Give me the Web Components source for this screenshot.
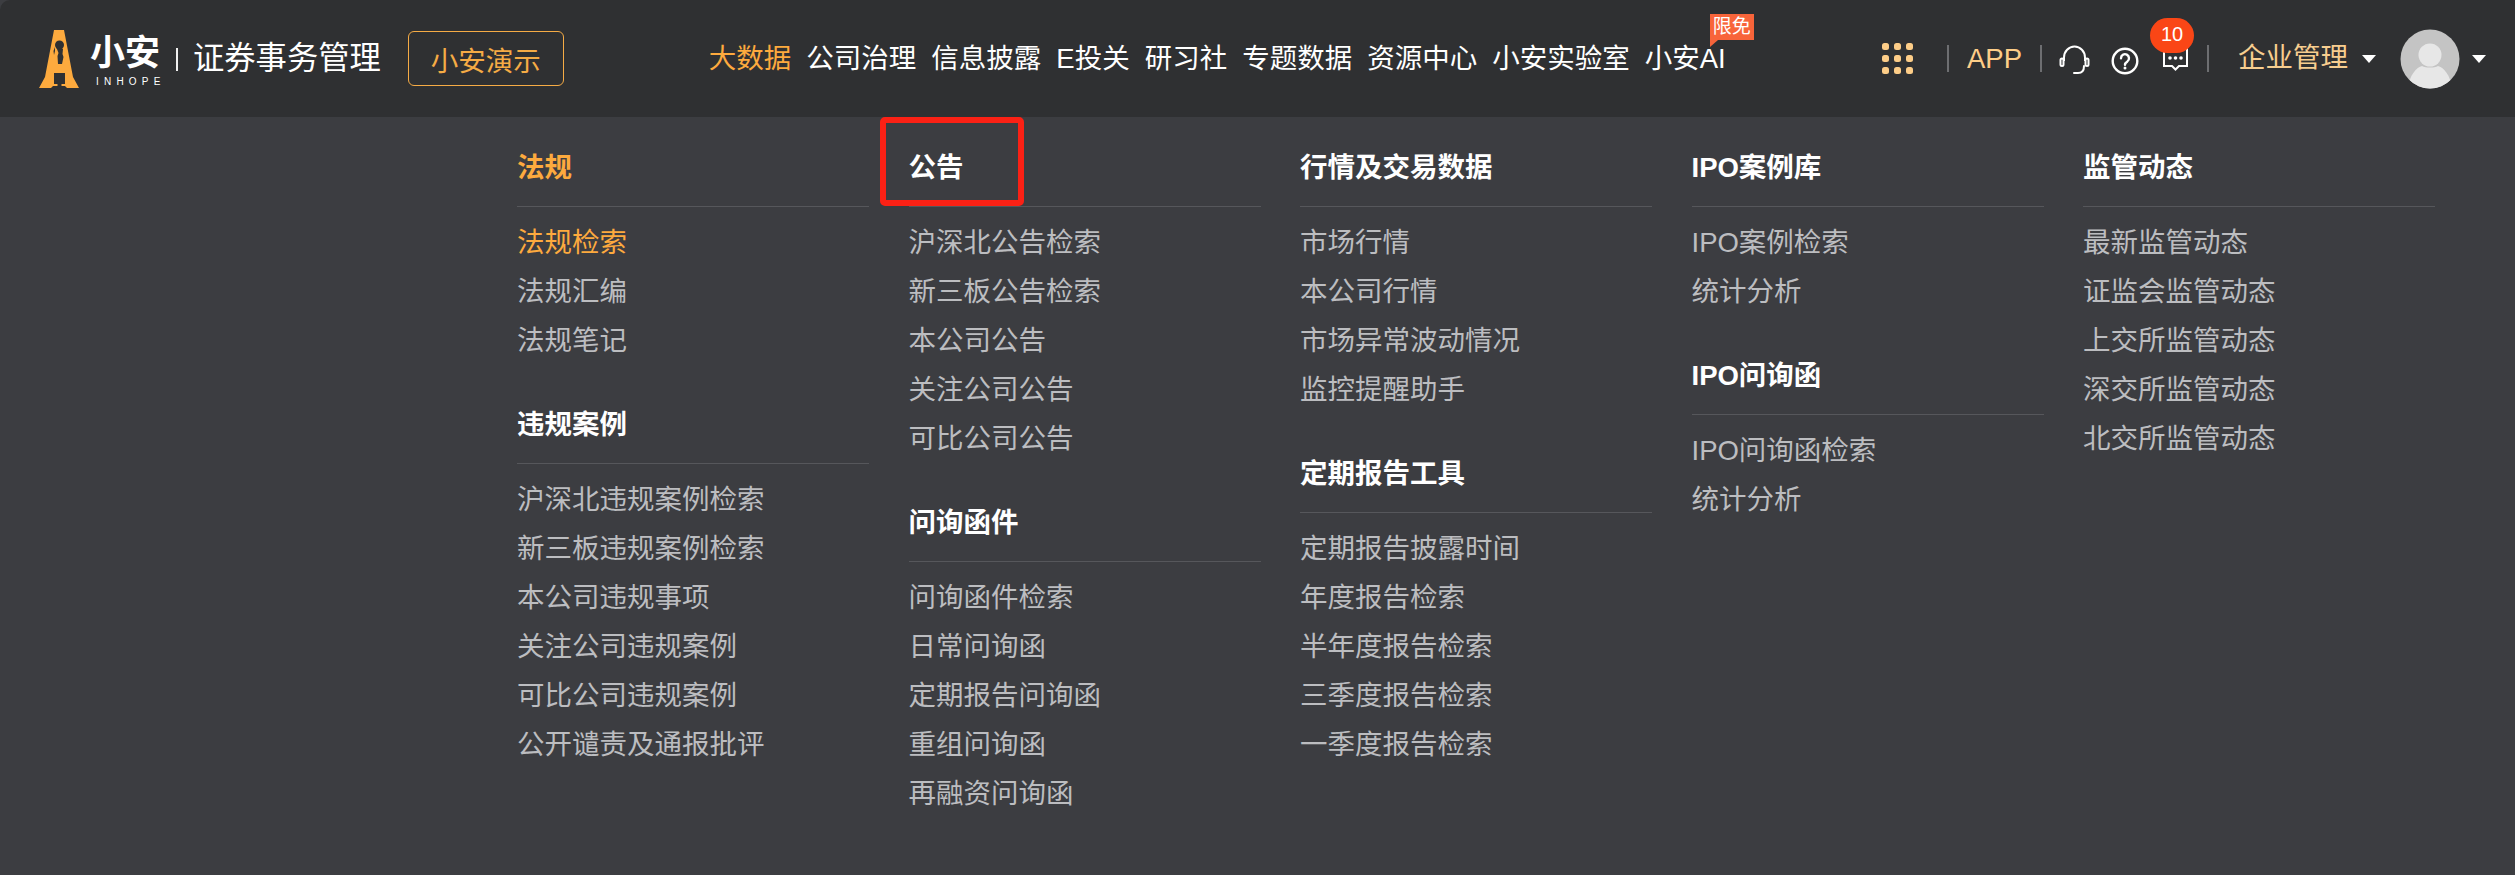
<!DOCTYPE html>
<html lang="zh-CN">
<head>
<meta charset="utf-8">
<title>小安 证券事务管理</title>
<style>
  html, body { margin: 0; height: 100%; background: #3c3d41; }
  body { font-family: "Liberation Sans", "Noto Sans CJK SC", sans-serif; overflow: hidden; }
</style>
</head>
<body>
<app-shell>
  <app-header slot="header">
    <nav-link slot="nav" active>大数据</nav-link>
    <nav-link slot="nav">公司治理</nav-link>
    <nav-link slot="nav">信息披露</nav-link>
    <nav-link slot="nav">E投关</nav-link>
    <nav-link slot="nav">研习社</nav-link>
    <nav-link slot="nav">专题数据</nav-link>
    <nav-link slot="nav">资源中心</nav-link>
    <nav-link slot="nav">小安实验室</nav-link>
    <nav-link slot="nav" tag="限免">小安AI</nav-link>
  </app-header>
  <mega-menu>
    <menu-column>
      <menu-group heading="法规" active>
        <menu-link active>法规检索</menu-link>
        <menu-link>法规汇编</menu-link>
        <menu-link>法规笔记</menu-link>
      </menu-group>
      <menu-group heading="违规案例">
        <menu-link>沪深北违规案例检索</menu-link>
        <menu-link>新三板违规案例检索</menu-link>
        <menu-link>本公司违规事项</menu-link>
        <menu-link>关注公司违规案例</menu-link>
        <menu-link>可比公司违规案例</menu-link>
        <menu-link>公开谴责及通报批评</menu-link>
      </menu-group>
    </menu-column>
    <menu-column>
      <menu-group heading="公告" marked>
        <menu-link>沪深北公告检索</menu-link>
        <menu-link>新三板公告检索</menu-link>
        <menu-link>本公司公告</menu-link>
        <menu-link>关注公司公告</menu-link>
        <menu-link>可比公司公告</menu-link>
      </menu-group>
      <menu-group heading="问询函件">
        <menu-link>问询函件检索</menu-link>
        <menu-link>日常问询函</menu-link>
        <menu-link>定期报告问询函</menu-link>
        <menu-link>重组问询函</menu-link>
        <menu-link>再融资问询函</menu-link>
      </menu-group>
    </menu-column>
    <menu-column>
      <menu-group heading="行情及交易数据">
        <menu-link>市场行情</menu-link>
        <menu-link>本公司行情</menu-link>
        <menu-link>市场异常波动情况</menu-link>
        <menu-link>监控提醒助手</menu-link>
      </menu-group>
      <menu-group heading="定期报告工具">
        <menu-link>定期报告披露时间</menu-link>
        <menu-link>年度报告检索</menu-link>
        <menu-link>半年度报告检索</menu-link>
        <menu-link>三季度报告检索</menu-link>
        <menu-link>一季度报告检索</menu-link>
      </menu-group>
    </menu-column>
    <menu-column>
      <menu-group heading="IPO案例库">
        <menu-link>IPO案例检索</menu-link>
        <menu-link>统计分析</menu-link>
      </menu-group>
      <menu-group heading="IPO问询函">
        <menu-link>IPO问询函检索</menu-link>
        <menu-link>统计分析</menu-link>
      </menu-group>
    </menu-column>
    <menu-column>
      <menu-group heading="监管动态">
        <menu-link>最新监管动态</menu-link>
        <menu-link>证监会监管动态</menu-link>
        <menu-link>上交所监管动态</menu-link>
        <menu-link>深交所监管动态</menu-link>
        <menu-link>北交所监管动态</menu-link>
      </menu-group>
    </menu-column>
  </mega-menu>
</app-shell>

<script>
// small helper, every element below has the same shadow setup
function shadow(el, html) {
  el.attachShadow({ mode: 'open' });
  el.shadowRoot.innerHTML = html;
}

class AppShell extends HTMLElement {
  constructor() {
    super();
    shadow(this, `
      <style>
        :host { display: flex; flex-direction: column; height: 875px; background: #3c3d41; }
      </style>
      <slot name="header"></slot>
      <slot></slot>
    `);
  }
}

class AppHeader extends HTMLElement {
  constructor() {
    super();
    shadow(this, `
      <style>
        :host {
          display: flex; align-items: center; height: 117px; padding: 0 29px 0 39px;
          box-sizing: border-box; background: #2f3032; color: #fff; flex: none;
          border-top-left-radius: 10px;
        }
        .logo { width: 40px; height: 60px; flex: none; }
        .mark { display: flex; flex-direction: column; align-items: flex-start; margin-left: 11px; width: 72px; }
        .mark b { font-size: 35px; line-height: 40px; font-weight: 700; margin-top: -4px; }
        .mark span { font-size: 10px; line-height: 12px; letter-spacing: 5.2px; margin: 3px 0 -7px 6px; }
        .bar { width: 2px; height: 23px; background: #f0f0f0; margin: 2px 15px 0 14px; flex: none; }
        .title { font-size: 31.3px; line-height: 40px; white-space: nowrap; }
        .demo {
          margin-left: 27px; width: 156px; height: 55px; box-sizing: border-box; flex: none;
          border: 1px solid #f5ab45; border-radius: 6px; color: #f5ab45;
          font-size: 27.5px; display: flex; align-items: center; justify-content: center;
        }
        nav { display: flex; gap: 15px; margin-left: 145px; }
        .right { display: flex; align-items: center; margin-left: auto; }
        .dots { display: grid; grid-template-columns: repeat(3, 7px); gap: 5px; margin-right: 34px; }
        .dots i { width: 7px; height: 7px; border-radius: 2.5px; background: #fdcd88; }
        .sep { width: 2px; height: 27px; background: #6d6e71; flex: none; }
        .app { color: #fdcd88; font-size: 27.5px; margin: 0 18px; }
        .icon { display: block; flex: none; }
        .msg { position: relative; margin-left: 24px; margin-right: 19px; width: 25px; height: 30px; }
        .badge {
          position: absolute; left: -13px; top: -26px; width: 44px; height: 35px; border-radius: 18px;
          background: #fa4616; color: #fff; font-size: 20px; line-height: 33px; text-align: center;
        }
        .org { color: #f7cd8f; font-size: 27.5px; line-height: 36px; margin: -2px 0 0 29px; white-space: nowrap; }
        .caret { width: 0; height: 0; border-left: 7.5px solid transparent; border-right: 7.5px solid transparent; border-top: 8px solid #fff; flex: none; }
        .avatar { display: block; flex: none; margin: 0 12px 0 24px; }
      </style>
      <svg class="logo" viewBox="0 0 40 60">
        <path fill="#fdaa3e" d="M15 1h10l9 47 6 11H28l-2-2H14l-2 2H0l6-11z"/>
        <g fill="#2f3032">
          <circle cx="20.500" cy="16" r="4.500"/>
          <path d="M18 20h6l-.5 5 1 3-1.500 7h-4l-.5-8 1-3z"/>
          <path d="M16 18l-1.500 4 .5 4 1-4z"/>
          <path d="M15 44h11v11h-3.500v3h-4v-3H15z"/>
        </g>
      </svg>
      <div class="mark"><b>小安</b><span>INHOPE</span></div>
      <div class="bar"></div>
      <div class="title">证券事务管理</div>
      <div class="demo">小安演示</div>
      <nav><slot name="nav"></slot></nav>
      <div class="right">
        <div class="dots">${'<i></i>'.repeat(9)}</div>
        <div class="sep"></div>
        <div class="app">APP</div>
        <div class="sep"></div>
        <svg class="icon" style="margin:2px 0 0 17px" width="31" height="30" viewBox="0 0 31 30" fill="none" stroke="#fff" stroke-width="2">
          <path d="M5 16V12.500a10.500 11 0 0 1 21 0V16"/>
          <rect x="1.500" y="13.500" width="3" height="7.500" rx="1.500"/>
          <rect x="26.500" y="13.500" width="3" height="7.500" rx="1.500"/>
          <path stroke-linecap="round" d="M25 21c0 4.500-2.500 7-6 7h-4"/>
        </svg>
        <svg class="icon" style="margin:4px 0 0 21px" width="28" height="28" viewBox="0 0 28 28" fill="none" stroke="#fff" stroke-width="2.400">
          <circle cx="14" cy="14" r="12.300"/>
          <path stroke-linecap="round" d="M10 11.200a4 4 0 1 1 6.400 3.200c-1.500 1-2.400 1.800-2.400 3.300"/>
          <circle cx="14" cy="21" r="1.500" fill="#fff" stroke="none"/>
        </svg>
        <div class="msg">
          <svg class="icon" width="25" height="30" viewBox="0 0 25 30" fill="none" stroke="#fff" stroke-width="2">
            <path d="M1 4v18h8l3.500 3.500 3.500-3.500h8V4z"/>
            <g fill="#fff" stroke="none"><circle cx="7" cy="14" r="1.800"/><circle cx="12.500" cy="14" r="1.800"/><circle cx="18" cy="14" r="1.800"/></g>
          </svg>
          <div class="badge">10</div>
        </div>
        <div class="sep"></div>
        <div class="org">企业管理</div>
        <div class="caret" style="margin-left:14px"></div>
        <svg class="avatar" width="60" height="60" viewBox="0 0 60 60">
          <defs><clipPath id="c"><circle cx="30" cy="30" r="29.500"/></clipPath></defs>
          <circle cx="30" cy="30" r="29.500" fill="#c4c4c4"/>
          <g clip-path="url(#c)" fill="#e7e7e7">
            <circle cx="30" cy="26" r="11.500"/>
            <path d="M8 60c1-14 9-22 14-23 4 2 12 2 16 0 5 1 13 9 14 23z"/>
          </g>
        </svg>
        <div class="caret"></div>
      </div>
    `);
  }
}

class NavLink extends HTMLElement {
  constructor() {
    super();
    const tag = this.getAttribute('tag');
    shadow(this, `
      <style>
        :host { display: block; position: relative; font-size: 27.5px; line-height: 40px; color: #fff; white-space: nowrap; }
        :host([active]) { color: #fdaa3e; }
        .tag {
          position: absolute; left: 65px; top: -25px; width: 44px; height: 26px;
          background: #f8643a; color: #fff; font-size: 19px; line-height: 25px; text-align: center;
        }
        .tag::after {
          content: ''; position: absolute; left: 0; top: 26px;
          border-left: 8px solid #f8643a; border-bottom: 7px solid transparent;
        }
      </style>
      <slot></slot>
      ${tag ? `<div class="tag">${tag}</div>` : ''}
    `);
  }
}

class MegaMenu extends HTMLElement {
  constructor() {
    super();
    shadow(this, `
      <style>
        :host {
          display: grid; grid-template-columns: repeat(5, 352px); column-gap: 39.5px;
          padding: 26px 0 0 517px; flex: 1;
        }
      </style>
      <slot></slot>
    `);
  }
}

class MenuColumn extends HTMLElement {
  constructor() {
    super();
    shadow(this, `
      <style>
        :host { display: flex; flex-direction: column; gap: 35px; }
      </style>
      <slot></slot>
    `);
  }
}

class MenuGroup extends HTMLElement {
  constructor() {
    super();
    shadow(this, `
      <style>
        :host { display: block; position: relative; }
        h3 {
          margin: 0; padding-bottom: 14px; font-size: 27.5px; line-height: 49px; font-weight: 700;
          color: #fff; border-bottom: 1px solid #56575b;
        }
        :host([active]) h3 { color: #fdaa3e; }
        .list { display: flex; flex-direction: column; margin-top: 11px; }
        .mark {
          display: none; position: absolute; left: -29px; top: -26px; width: 144px; height: 89px;
          box-sizing: border-box; border: 6px solid #fb2115; border-radius: 5px;
        }
        :host([marked]) .mark { display: block; }
      </style>
      <h3>${this.getAttribute('heading')}</h3>
      <div class="list"><slot></slot></div>
      <div class="mark"></div>
    `);
  }
}

class MenuLink extends HTMLElement {
  constructor() {
    super();
    shadow(this, `
      <style>
        :host { display: block; font-size: 27.5px; line-height: 49px; color: #bcbdc0; white-space: nowrap; }
        :host([active]) { color: #fdaa3e; }
      </style>
      <slot></slot>
    `);
  }
}

customElements.define('app-shell', AppShell);
customElements.define('app-header', AppHeader);
customElements.define('nav-link', NavLink);
customElements.define('mega-menu', MegaMenu);
customElements.define('menu-column', MenuColumn);
customElements.define('menu-group', MenuGroup);
customElements.define('menu-link', MenuLink);
</script>
</body>
</html>
